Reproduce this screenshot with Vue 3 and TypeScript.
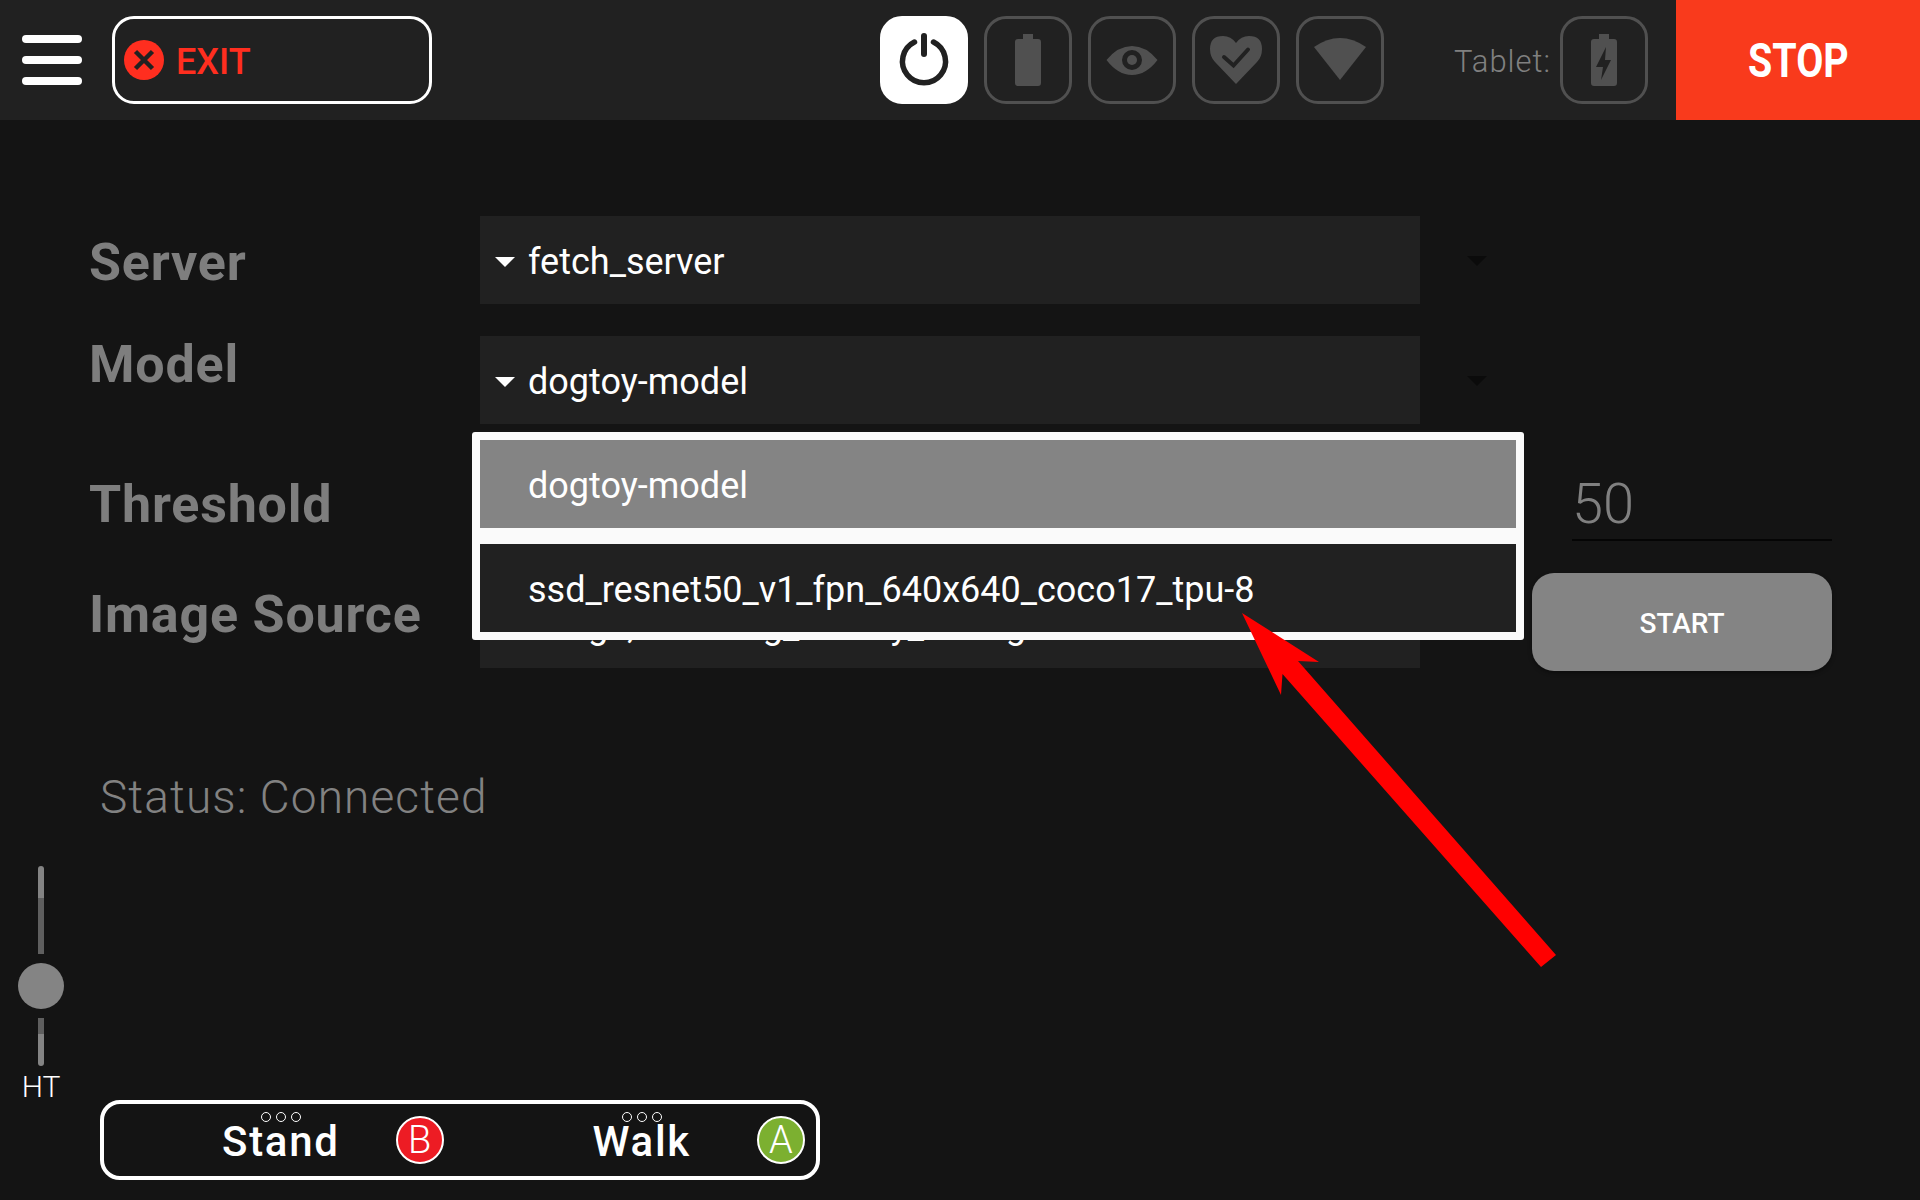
<script setup lang="ts">
const statusIcons = ['battery', 'eye', 'heart', 'wifi']
</script>

<template>
  <div class="page">
    <header class="top">
      <div class="burger"><i></i><i></i><i></i></div>
      <div class="exit">
        <svg class="exit-ico" viewBox="0 0 40 40">
          <circle cx="20" cy="20" r="20" fill="#ff2e1f" />
          <path d="M11.500 11.500 L28.500 28.500 M28.500 11.500 L11.500 28.500" stroke="#212121" stroke-width="4.5" fill="none" />
        </svg>
        <span class="exit-txt">EXIT</span>
      </div>
      <div class="status-icons">
        <div class="ico-btn on">
          <svg viewBox="0 0 88 88">
            <path d="M34.500 26 A21.500 21.500 0 1 0 53.500 26" fill="none" stroke="#212121" stroke-width="5.5" stroke-linecap="round" />
            <path d="M44 20 V38" fill="none" stroke="#212121" stroke-width="6" stroke-linecap="round" />
          </svg>
        </div>
        <div v-for="n in statusIcons" :key="n" class="ico-btn">
          <svg v-if="n === 'battery'" viewBox="0 0 88 88">
            <path d="M39 18 H49 V23 H54 Q57 23 57 26 V67 Q57 70 54 70 H34 Q31 70 31 67 V26 Q31 23 34 23 H39 Z" fill="#505050" />
          </svg>
          <svg v-else-if="n === 'eye'" viewBox="0 0 88 88">
            <path fill-rule="evenodd" d="M18.500 44 Q30 30 44 30 Q58 30 69.500 44 Q58 59 44 59 Q30 59 18.500 44 Z M44 34 A10 10 0 1 0 44 54 A10 10 0 1 0 44 34 Z" fill="#505050" />
            <circle cx="44" cy="44" r="5" fill="#505050" />
          </svg>
          <svg v-else-if="n === 'heart'" viewBox="0 0 88 88">
            <path d="M44 68 L23 46 Q18 41 18 33 Q18 20 31 20 Q39 20 44 27 Q49 20 57 20 Q70 20 70 33 Q70 41 65 46 Z" fill="#505050" />
            <path d="M32 41 L41.500 49.500 L56 33.500" fill="none" stroke="#212121" stroke-width="4" stroke-linecap="round" />
          </svg>
          <svg v-else viewBox="0 0 88 88">
            <path d="M18 31 Q44 13 70 31 L44 64 Z" fill="#505050" />
          </svg>
        </div>
      </div>
      <span class="tablet">Tablet:</span>
      <div class="ico-btn tablet-btn">
        <svg viewBox="0 0 88 88">
          <path d="M39 18 H49 V23 H54 Q57 23 57 26 V67 Q57 70 54 70 H34 Q31 70 31 67 V26 Q31 23 34 23 H39 Z" fill="#505050" />
          <path d="M46 31 L36 51 H43 L41 64 L51 44 H45 Z" fill="#212121" />
        </svg>
      </div>
      <div class="stop"><span>STOP</span></div>
    </header>

    <main class="main">
      <section class="form">
        <div class="label lbl-server">Server</div>
        <div class="select"><i class="tri"></i>fetch_server</div>
        <div class="side"><i class="dark-tri"></i></div>

        <div class="label lbl-model">Model</div>
        <div class="select"><i class="tri"></i>dogtoy-model</div>
        <div class="side"><i class="dark-tri"></i></div>

        <div class="label lbl-threshold">Threshold</div>
        <div></div>
        <div class="side value"><span>50</span></div>

        <div class="label lbl-source">Image Source</div>
        <div class="select"><i class="tri"></i>image, counting_history_storage</div>
        <div class="side"><button class="start">START</button></div>
      </section>

      <p class="status">Status: Connected</p>

      <footer class="foot">
        <div class="slider">
          <div class="track track-a"></div>
          <div class="knob"></div>
          <div class="track track-b"></div>
          <div class="ht">HT</div>
        </div>
        <div class="bar">
          <div class="action act-stand">
            <div class="act-text"><span class="dots"><i></i><i></i><i></i></span><span class="act-name">Stand</span></div>
            <span class="round red">B</span>
          </div>
          <div class="action act-walk">
            <div class="act-text"><span class="dots"><i></i><i></i><i></i></span><span class="act-name">Walk</span></div>
            <span class="round green">A</span>
          </div>
        </div>
      </footer>
    </main>

    <div class="menu">
      <div class="item sel">dogtoy-model</div>
      <div class="item">ssd_resnet50_v1_fpn_640x640_coco17_tpu-8</div>
    </div>

    <svg class="arrow" viewBox="0 0 1920 1200">
      <polygon points="1242,613 1319,662 1298,661 1556,955 1541,967 1282.500,674 1281,695" fill="#ff0000" />
    </svg>
  </div>
</template>

<style>
html, body { margin: 0; background: #141414; }
</style>

<style scoped>
.page {
  position: relative;
  width: 1920px;
  height: 1200px;
  overflow: hidden;
  display: flex;
  flex-direction: column;
  background: #141414;
  font-family: Roboto, "Liberation Sans", sans-serif;
  color: #fff;
}
.top {
  height: 120px;
  flex: none;
  display: flex;
  align-items: center;
  background: #212121;
}
.burger {
  width: 60px;
  margin-left: 22px;
  display: flex;
  flex-direction: column;
  gap: 13px;
}
.burger i {
  display: block;
  height: 8px;
  border-radius: 4px;
  background: #fff;
}
.exit {
  width: 320px;
  height: 88px;
  margin-left: 30px;
  box-sizing: border-box;
  border: 3px solid #fff;
  border-radius: 22px;
  display: flex;
  align-items: center;
  padding-left: 9px;
  gap: 12px;
}
.exit-ico { width: 40px; height: 40px; }
.exit-txt { font-size: 36px; font-weight: 500; color: #ff2e1f; padding-top: 4px; }
.status-icons {
  display: flex;
  gap: 16px;
  margin-left: 448px;
}
.ico-btn {
  width: 88px;
  height: 88px;
  box-sizing: border-box;
  border: 3px solid #505050;
  border-radius: 22px;
  overflow: hidden;
}
.ico-btn svg { display: block; width: 88px; height: 88px; margin: -3px; }
.ico-btn.on { background: #fff; border-color: #fff; }
.tablet {
  margin-left: 70px;
  width: 106px;
  padding-top: 2px;
  font-size: 31px;
  font-weight: 300;
  letter-spacing: 1px;
  color: #808080;
}
.tablet-btn { flex: none; }
.stop {
  margin-left: 28px;
  width: 244px;
  height: 120px;
  background: #f93a1c;
  display: flex;
  align-items: center;
  justify-content: center;
  font-size: 48px;
  font-weight: 700;
}
.stop span { display: inline-block; transform: scaleX(0.82); }
.main {
  flex: 1;
  display: flex;
  flex-direction: column;
  min-height: 0;
}
.form {
  margin-top: 96px;
  display: grid;
  grid-template-columns: 480px 940px 1fr;
  grid-template-rows: 88px 88px 92px 88px;
  row-gap: 32px;
}
.label {
  padding-left: 89px;
  font-size: 52px;
  font-weight: 700;
  letter-spacing: 0.8px;
  color: #7e7e7e;
  display: flex;
  align-items: center;
  white-space: nowrap;
}
.lbl-server { padding-top: 4px; }
.lbl-model { padding-bottom: 32px; }
.lbl-threshold { padding-top: 4px; }
.lbl-source { padding-bottom: 20px; }
.select {
  background: #212121;
  display: flex;
  align-items: center;
  padding-top: 4px;
  box-sizing: border-box;
  font-size: 36px;
  color: #fff;
}
.tri {
  width: 0;
  height: 0;
  margin: 0 13px 0 15px;
  border-left: 10px solid transparent;
  border-right: 10px solid transparent;
  border-top: 10px solid #fff;
}
.side { position: relative; }
.dark-tri {
  display: block;
  width: 0;
  height: 0;
  margin: 40px 0 0 47px;
  border-left: 10px solid transparent;
  border-right: 10px solid transparent;
  border-top: 10px solid #0b0b0b;
}
.value {
  margin-left: 152px;
  width: 260px;
  height: 85px;
  box-sizing: border-box;
  border-bottom: 2px solid #050505;
  font-size: 56px;
  font-weight: 300;
  color: #808080;
  padding: 15px 0 0 0;
}
.value span { letter-spacing: 0; line-height: 66px; }
.start {
  display: block;
  margin: -7px 0 0 112px;
  width: 300px;
  height: 98px;
  border: 0;
  border-radius: 22px;
  padding-top: 4px;
  background: #848484;
  color: #fff;
  font-family: Roboto, sans-serif;
  font-size: 28px;
  font-weight: 500;
  box-shadow: 0 2px 4px rgba(0, 0, 0, 0.4);
}
.status {
  margin: 101px 0 0 100px;
  font-size: 46px;
  font-weight: 300;
  letter-spacing: 1.1px;
  color: #828282;
  line-height: 56px;
}
.foot {
  margin-top: auto;
  padding-bottom: 20px;
  display: flex;
  align-items: flex-start;
}
.slider {
  width: 100px;
  box-sizing: border-box;
  padding-left: 18px;
  display: flex;
  flex-direction: column;
}
.track {
  width: 6px;
  margin-left: 20px;
  background: #848484;
}
.track-a {
  height: 88px;
  border-radius: 3px 3px 0 0;
  background: linear-gradient(#848484 0 36%, #5f5f5f 36% 100%);
}
.knob {
  width: 46px;
  height: 46px;
  margin: 9px 0;
  border-radius: 50%;
  background: #848484;
}
.track-b {
  height: 48px;
  border-radius: 0 0 3px 3px;
  background: linear-gradient(#5f5f5f 0 33%, #848484 33% 100%);
}
.ht {
  width: 46px;
  margin-top: 3px;
  text-align: center;
  font-size: 30px;
  font-weight: 300;
  line-height: 36px;
  color: #fff;
}
.bar {
  width: 720px;
  height: 80px;
  margin-top: 234px;
  box-sizing: border-box;
  border: 4px solid #fff;
  border-radius: 20px;
  display: flex;
  align-items: flex-start;
}
.action {
  display: flex;
  align-items: flex-start;
}
.act-stand { margin-left: 118px; }
.act-walk { margin-left: 149px; }
.act-text {
  display: flex;
  flex-direction: column;
  align-items: center;
}
.dots {
  display: flex;
  gap: 5px;
  margin-top: 8px;
}
.dots i {
  display: block;
  box-sizing: border-box;
  width: 10px;
  height: 10px;
  border: 1.500px solid #fff;
  border-radius: 50%;
}
.act-name {
  font-size: 42px;
  font-weight: 500;
  letter-spacing: 1.7px;
  line-height: 42px;
  margin-top: -1px;
}
.round {
  box-sizing: border-box;
  width: 48px;
  height: 48px;
  margin: 12px 0 0 56px;
  border: 2px solid #fff;
  border-radius: 50%;
  display: flex;
  align-items: center;
  justify-content: center;
  font-size: 38px;
  font-weight: 300;
}
.green { margin-left: 66px; }
.red { background: #ed1c24; }
.green { background: #7cb030; }
.menu {
  position: absolute;
  left: 472px;
  top: 432px;
  width: 1052px;
  box-sizing: border-box;
  padding: 8px;
  border-radius: 3px;
  background: #fafafa;
  display: flex;
  flex-direction: column;
  gap: 16px;
}
.item {
  height: 88px;
  box-sizing: border-box;
  padding: 4px 0 0 48px;
  display: flex;
  align-items: center;
  background: #212121;
  font-size: 36px;
  color: #fff;
}
.item.sel { background: #848484; }
.arrow {
  position: absolute;
  left: 0;
  top: 0;
  width: 1920px;
  height: 1200px;
  pointer-events: none;
}
</style>
